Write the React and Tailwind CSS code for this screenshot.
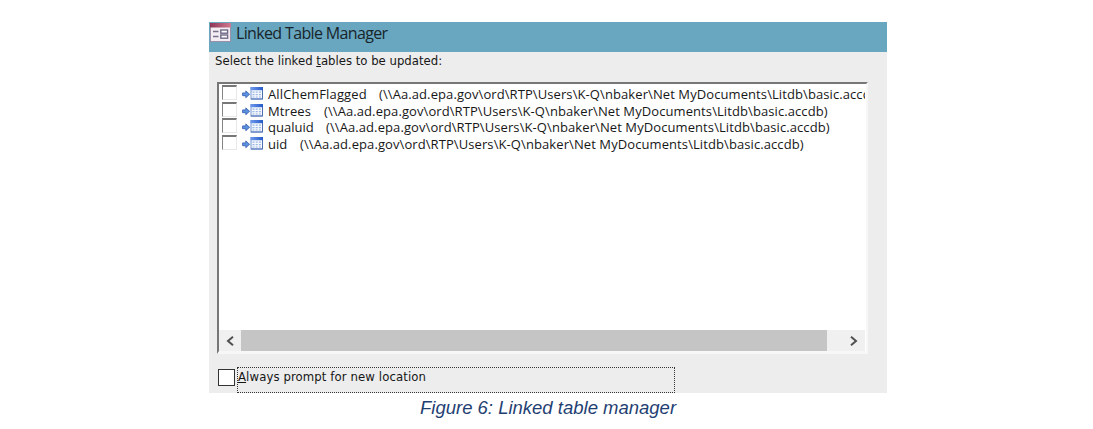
const path = '(\\\\Aa.ad.epa.gov\\ord\\RTP\\Users\\K-Q\\nbaker\\Net MyDocuments\\Litdb\\basic.accdb)';

const tables = [
  { name: 'AllChemFlagged', width: 'w-[111px]', spacing: 'tracking-[0.14px]' },
  { name: 'Mtrees', width: 'w-[56px]', spacing: 'tracking-[0.1px]' },
  { name: 'qualuid', width: 'w-[58px]', spacing: 'tracking-[0px]' },
  { name: 'uid', width: 'w-[32px]', spacing: 'tracking-[0px]' },
];

function FormIcon() {
  return (
    <svg className="block h-[19px] w-[21px] shrink-0" viewBox="0 0 21 19">
      <defs>
        <linearGradient id="formHead" x1="0" y1="0" x2="1" y2="0">
          <stop offset="0" stopColor="#8c3555" />
          <stop offset="1" stopColor="#d07a92" />
        </linearGradient>
      </defs>
      <rect x=".5" y=".5" width="20" height="18" fill="#f3ecf3" stroke="#9c90a8" />
      <rect width="21" height="4.5" fill="url(#formHead)" />
      <path d="M3 8.5h5.5M3 13.5h5.5" stroke="#77718c" strokeWidth="1.5" />
      <rect x="10.8" y="7" width="6.8" height="3.2" fill="#fff" stroke="#6f6a88" strokeWidth="1.4" />
      <rect x="10.8" y="12" width="6.8" height="3.2" fill="#fff" stroke="#6f6a88" strokeWidth="1.4" />
    </svg>
  );
}

function LinkedTableIcon() {
  return (
    <svg className="mt-px ml-[5px] block h-[14px] w-[22px] shrink-0" viewBox="0 0 22 14">
      <defs>
        <linearGradient id="tableHead" x1="0" y1="0" x2="1" y2="0">
          <stop offset="0" stopColor="#719aec" />
          <stop offset="1" stopColor="#2459c7" />
        </linearGradient>
      </defs>
      <path d="M.6 6.9h3.2V4.9L7.6 8.3l-3.8 3.4V9.7H.6z" fill="#5c91e0" stroke="#315bae" strokeWidth=".8" />
      <rect x="9" y="1.5" width="11.5" height="11.5" fill="#f4f8ff" stroke="#7795ce" />
      <path d="M20.5 3v10H9" fill="none" stroke="#4d70b5" />
      <rect x="8.5" y="1" width="12.5" height="3.2" fill="url(#tableHead)" />
      <path d="M10.5 6.2h2m1.2 0h2m1.2 0h2M10.5 8.6h2m1.2 0h2m1.2 0h2M10.5 11h2m1.2 0h2m1.2 0h2" stroke="#9cb5e2" strokeWidth="1.2" />
    </svg>
  );
}

function TableRow({ table }) {
  return (
    <div className="flex h-[16.7px] items-start">
      <div className="h-[15px] w-[15px] shrink-0 border-t-2 border-r border-b border-l border-t-[#777] border-r-[#e8e8e8] border-b-[#e8e8e8] border-l-[#858585] bg-white" />
      <LinkedTableIcon />
      <div className="mt-px ml-1 flex h-[17px] whitespace-pre font-['Open_Sans','Noto_Sans',sans-serif] text-[13px] leading-[17px] text-[#171717]">
        <span className={`${table.width} ${table.spacing} shrink-0`}>{table.name}</span>
        <span className="tracking-[0.09px]">{path}</span>
      </div>
    </div>
  );
}

function Chevron({ flip }) {
  return (
    <svg className={flip ? 'h-[10px] w-2 rotate-180' : 'h-[10px] w-2'} viewBox="0 0 8 10">
      <path d="M7 .8 2 5l5 4.2" fill="none" stroke="#505050" strokeWidth="2" />
    </svg>
  );
}

export default function App() {
  return (
    <main className="h-[429px] w-[1093px] overflow-hidden bg-white pt-[22px] pl-[209px]">
      <section className="h-[371px] w-[678px] bg-[#ededed]">
        <header className="flex h-[30px] items-start bg-[#69a6bf] pt-px pl-px">
          <FormIcon />
          <h1 className="ml-[5px] whitespace-nowrap font-['Open_Sans','Noto_Sans',sans-serif] text-[16px] leading-[21px] tracking-[-0.65px] text-[#17252b]">Linked Table Manager</h1>
        </header>
        <p className="h-[30px] whitespace-nowrap pl-[6px] font-['DejaVu_Sans_Condensed','DejaVu_Sans',sans-serif] text-[13px] leading-[17px] text-[#171717]">
          Select the linked <span className="underline underline-offset-1">t</span>ables to be updated:
        </p>
        <div className="ml-[8px] flex h-[272px] w-[651px] flex-col border-t-2 border-r-2 border-b-[3px] border-l-2 border-t-[#777] border-r-[#f7f7f7] border-b-[#f7f7f7] border-l-[#777] bg-white">
          <div className="h-[246px] w-[646px] overflow-hidden pt-px pl-[3px]">
            {tables.map((table) => <TableRow key={table.name} table={table} />)}
          </div>
          <div className="flex h-[21px] w-[646px] bg-[#f0f0f0]">
            <div className="flex w-[22px] items-center justify-center"><Chevron /></div>
            <div className="w-[586px] bg-[#c5c5c5]" />
            <div className="flex flex-1 items-center justify-center pl-[16px]"><Chevron flip /></div>
          </div>
        </div>
        <label className="flex pt-[13px] pl-[9px]">
          <span className="mt-[2px] h-[17px] w-[17px] border border-[#333] bg-white" />
          <span className="ml-[2px] h-[26px] w-[438px] whitespace-nowrap border border-dotted border-[#333] font-['DejaVu_Sans_Condensed','DejaVu_Sans',sans-serif] text-[13px] leading-[17px] tracking-[0.1px] text-[#171717]">
            <span className="underline underline-offset-1">A</span>lways prompt for new location
          </span>
        </label>
      </section>
      <p className="mt-[4px] ml-[211px] whitespace-nowrap font-['Liberation_Sans',Arial,sans-serif] text-[18.5px] italic leading-[21px] text-[#1f3f73]">Figure 6: Linked table manager</p>
    </main>
  );
}
